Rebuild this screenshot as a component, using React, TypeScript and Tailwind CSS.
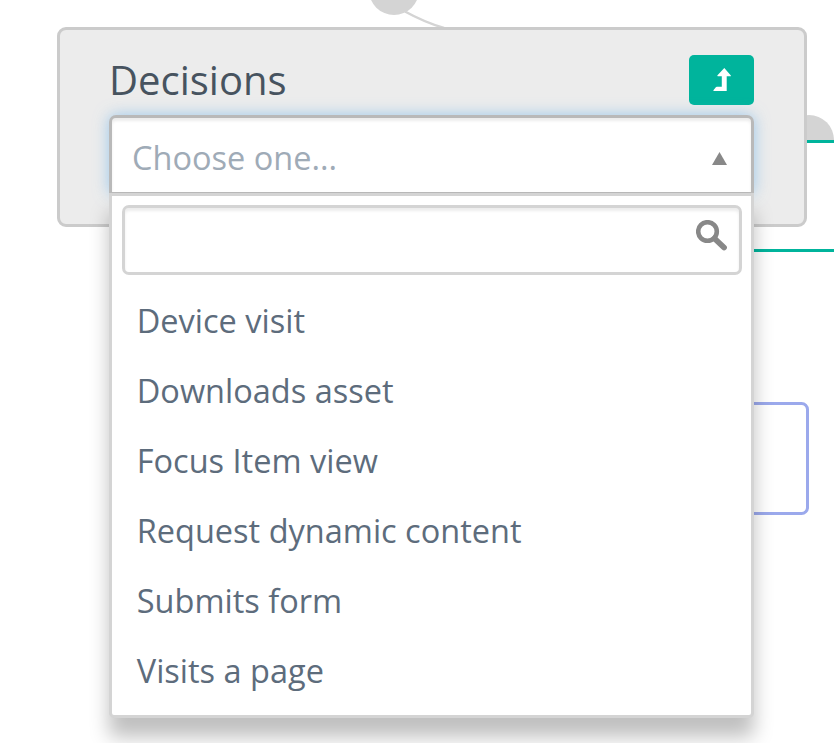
const options = [
  'Device visit',
  'Downloads asset',
  'Focus Item view',
  'Request dynamic content',
  'Submits form',
  'Visits a page',
];

function Connectors() {
  return (
    <svg className="absolute inset-0" width="834" height="743" viewBox="0 0 834 743" fill="none">
      <path d="M405 11.5Q424 22 444 28" stroke="#d4d4d4" strokeWidth="2.5" />
      <circle cx="394" cy="-10" r="25" fill="#d4d4d4" />
      <path d="M784 140a25 25 0 0 1 50 0z" fill="#d4d4d4" />
      <path d="M800 141.5H834M740 250.5H834" stroke="#00b49c" strokeWidth="3" />
      <rect x="601.5" y="403.5" width="206" height="110" rx="6" stroke="#9ba9ec" strokeWidth="3" />
    </svg>
  );
}

function LevelUpIcon() {
  return (
    <svg className="mb-[2px]" width="18" height="23" viewBox="0 0 17 22" fill="#fff">
      <path d="M10.7 0L17 7.2Q17 8 16.4 8H13V22H.6Q0 21.8.3 21.3L2.6 18.4Q3 18 3.5 18H8.3V8H4.6Q3.6 7.8 4.2 7Z" />
    </svg>
  );
}

function SearchIcon() {
  return (
    <svg width="31" height="31" viewBox="0 0 31 31" fill="none" stroke="#888">
      <circle cx="11.5" cy="11.5" r="9.3" strokeWidth="4.6" />
      <path d="M18.5 18.5L28 27.5" strokeWidth="5.8" strokeLinecap="round" />
    </svg>
  );
}

export default function App() {
  return (
    <main className="relative h-[743px] w-[834px] overflow-hidden bg-white pt-[27px] pl-[57px] font-['Open_Sans','Noto_Sans',sans-serif]">
      <Connectors />
      <section className="relative h-[200px] w-[750px] rounded-[9px] border-3 border-[#cbcbcb] bg-[#ececec] pt-[25px] pr-[50px] pl-[49px]">
        <header className="flex h-[50px] items-center justify-between">
          <h1 className="pb-px text-[40px] leading-[48px] text-[#47535f]">Decisions</h1>
          <button className="flex h-[50px] w-[65px] items-center justify-center rounded-[5px] bg-[#00b49c]">
            <LevelUpIcon />
          </button>
        </header>
        <div className="relative mt-[10px] h-[78px] w-[645px] rounded-t-[7px] border-3 border-b border-[#b9b9b9] bg-white shadow-[inset_0_3px_3px_rgba(0,0,0,0.075),0_0_15px_rgba(102,175,233,0.6)]">
          <div className="flex h-[75px] items-center justify-between border-b border-[#b9b9b9] pr-[24px] pb-px pl-[20px]">
            <span className="pt-[6px] text-[32.5px] leading-[46px] text-[#9fabb7]">Choose one...</span>
            <svg className="mt-[7px]" width="15" height="13" viewBox="0 0 15 13">
              <path d="M7.5 0L15 13H0z" fill="#888" />
            </svg>
          </div>
          <div className="absolute top-[75px] -left-[3px] h-[525px] w-[645px] rounded-b-[5px] border-3 border-[#d4d4d4] bg-white pt-[9px] pr-[9px] pl-[10px] shadow-[0_19px_19px_rgba(0,0,0,0.25)]">
            <div className="flex h-[70px] items-start justify-end rounded-[7px] border-3 border-[#d4d4d4] pt-[12px] pr-[12px] shadow-[inset_0_3px_3px_rgba(0,0,0,0.075)]">
              <SearchIcon />
            </div>
            <ul className="pt-[11px] pl-[14.75px] text-[32.5px] text-[#5d6c7c]">
              {options.map((option) => (
                <li key={option} className="h-[70px] leading-[70px]">
                  {option}
                </li>
              ))}
            </ul>
          </div>
        </div>
      </section>
    </main>
  );
}
